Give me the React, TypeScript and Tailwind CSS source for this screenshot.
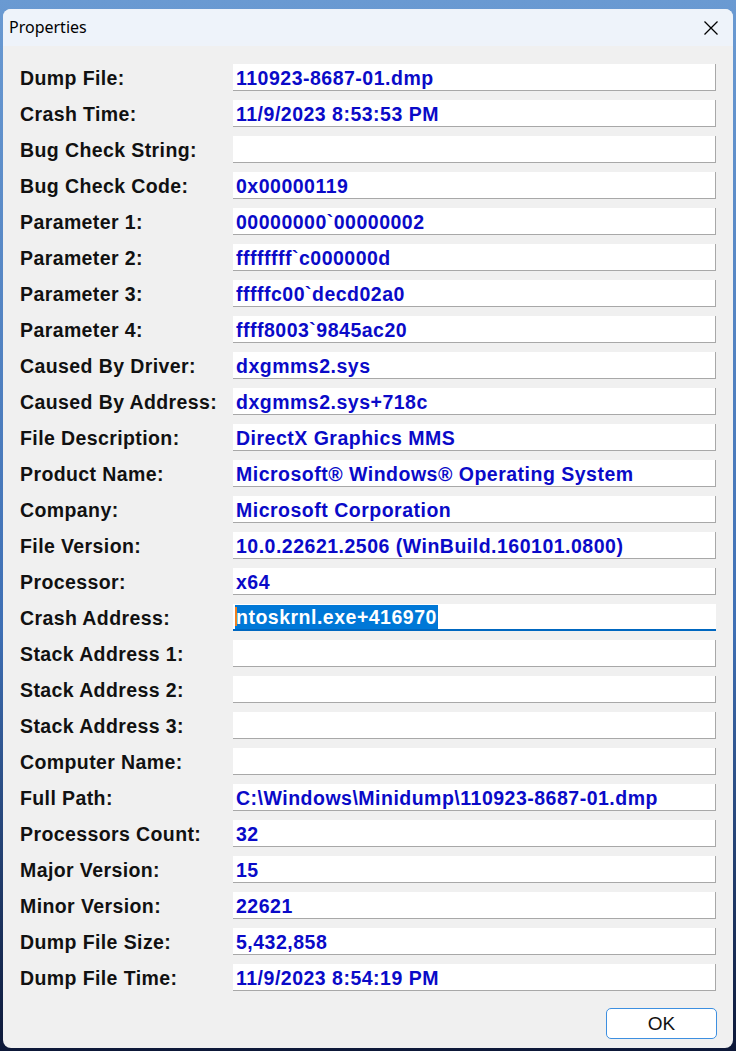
import React from 'react';

const rows: [string, string][] = [
  ['Dump File:', '110923-8687-01.dmp'],
  ['Crash Time:', '11/9/2023 8:53:53 PM'],
  ['Bug Check String:', ''],
  ['Bug Check Code:', '0x00000119'],
  ['Parameter 1:', '00000000`00000002'],
  ['Parameter 2:', 'ffffffff`c000000d'],
  ['Parameter 3:', 'fffffc00`decd02a0'],
  ['Parameter 4:', 'ffff8003`9845ac20'],
  ['Caused By Driver:', 'dxgmms2.sys'],
  ['Caused By Address:', 'dxgmms2.sys+718c'],
  ['File Description:', 'DirectX Graphics MMS'],
  ['Product Name:', 'Microsoft® Windows® Operating System'],
  ['Company:', 'Microsoft Corporation'],
  ['File Version:', '10.0.22621.2506 (WinBuild.160101.0800)'],
  ['Processor:', 'x64'],
  ['Crash Address:', 'ntoskrnl.exe+416970'],
  ['Stack Address 1:', ''],
  ['Stack Address 2:', ''],
  ['Stack Address 3:', ''],
  ['Computer Name:', ''],
  ['Full Path:', 'C:\\Windows\\Minidump\\110923-8687-01.dmp'],
  ['Processors Count:', '32'],
  ['Major Version:', '15'],
  ['Minor Version:', '22621'],
  ['Dump File Size:', '5,432,858'],
  ['Dump File Time:', '11/9/2023 8:54:19 PM'],
];

const FOCUSED = 'Crash Address:';

export default function App() {
  return (
    <div className="w-[736px] h-[1051px] overflow-hidden bg-[linear-gradient(180deg,#6a9ad2_0%,#3e6fb4_60%,#0d1838_100%)] pt-[9px] pl-[3px] pr-[3px] pb-[3px]">
      <div className="h-full flex flex-col rounded-[8px] overflow-hidden bg-[#f0f0f0] font-['Liberation_Sans',Arial,sans-serif]">
        {/* Title bar */}
        <div className="h-[37px] shrink-0 flex items-center justify-between bg-[#eef3fa] pl-[6px] pr-[14px]">
          <span className="text-[16px] text-black font-['Noto_Sans',sans-serif] -mt-[1px]">Properties</span>
          <svg width="16" height="16" viewBox="0 0 16 16" className="text-black">
            <path d="M1.5 1.5 L14.5 14.5 M14.5 1.5 L1.5 14.5" stroke="currentColor" strokeWidth="1.3" fill="none" />
          </svg>
        </div>

        {/* Fields */}
        <div className="flex flex-col gap-[9px] pt-[18px] pl-[17px] pr-[17px]">
          {rows.map(([label, value]) => {
            const focused = label === FOCUSED;
            return (
              <div key={label} className="flex items-center h-[27px]">
                <div className="w-[213px] shrink-0 text-[19.5px] font-bold text-[#111] leading-none tracking-[0.4px] pt-[2px]">
                  {label}
                </div>
                <div
                  className={
                    focused
                      ? 'flex-1 h-[27px] bg-white border-b-2 border-[#0067c0] flex items-center pl-[2px]'
                      : 'flex-1 h-[27px] bg-white border-b border-r border-[#a8a8a8] flex items-center pl-[3px]'
                  }
                >
                  {focused ? (
                    <span className="relative bg-[#0078d7] text-white text-[19.5px] font-bold leading-[23px] tracking-[0.5px] pl-[1px] pr-[1px] pt-[1px]">
                      <span className="absolute left-0 top-[2px] w-[2px] h-[19px] bg-[#f08020]" />
                      {value}
                    </span>
                  ) : (
                    <span className="text-[19.5px] font-bold text-[#0a0ac8] leading-none tracking-[0.5px] whitespace-nowrap pt-[3px]">
                      {value}
                    </span>
                  )}
                </div>
              </div>
            );
          })}
        </div>

        {/* Footer */}
        <div className="flex justify-end pr-[16px] mt-[17px]">
          <button className="w-[111px] h-[31px] bg-white border-[1.5px] border-[#3d8fe0] rounded-[5px] text-[19px] text-[#111] leading-none">
            OK
          </button>
        </div>
      </div>
    </div>
  );
}
